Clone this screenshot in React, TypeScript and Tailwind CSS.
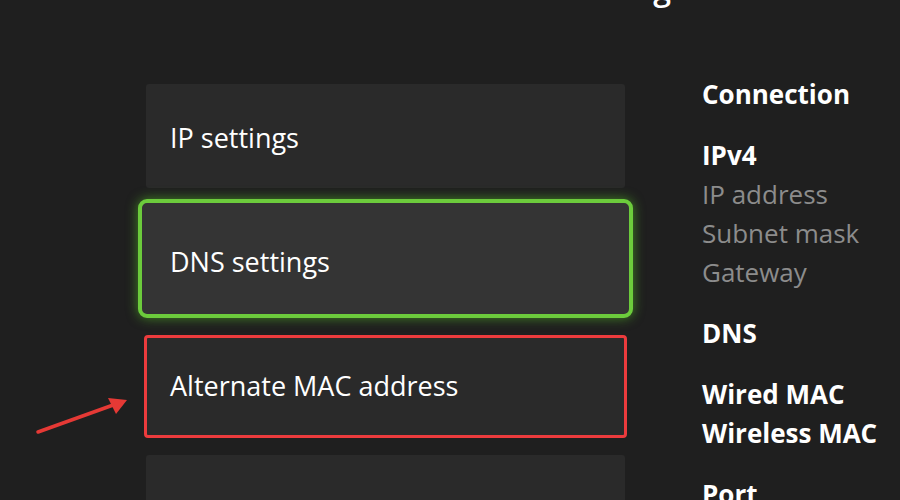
const font = { fontFamily: '"Open Sans", "Noto Sans", sans-serif' }

function Arrow() {
  return (
    <svg className="absolute left-[30px] top-[392px]" width="110" height="50" viewBox="0 0 110 50">
      <line x1="8" y1="40" x2="86" y2="12" stroke="#e53935" strokeWidth="3.5" strokeLinecap="round" />
      <path d="M97 8 L78 6 L86 22 Z" fill="#e53935" />
    </svg>
  )
}

export default function App() {
  return (
    <div className="relative w-[900px] h-[500px] overflow-hidden bg-[#1f1f1f] text-white" style={font}>
      {/* cut-off page title */}
      <div className="absolute left-[405px] top-[-30px] text-[32px] leading-[36px] font-semibold">Advanced settings</div>

      <div className="flex">
        {/* option cards */}
        <div className="ml-[146px] w-[479px] flex flex-col">
          <div className="mt-[84px] h-[104px] bg-[#2a2a2a] rounded-[3px] flex items-center pt-1 px-6 text-[27px]">
            IP settings
          </div>
          <div className="mt-[11px] -mx-2 h-[119px] bg-[#343434] rounded-[9px] border-4 border-[#6ccb3c] shadow-[0_0_12px_rgba(90,200,40,0.6)] flex items-center pt-2 pl-[28px] text-[27px]">
            DNS settings
          </div>
          <div className="mt-[17px] -mx-[2px] h-[103px] bg-[#2a2a2a] rounded-[4px] border-[3px] border-[#ec3b3d] flex items-center pl-[23px] text-[27px]">
            Alternate MAC address
          </div>
          <div className="mt-[17px] h-[60px] bg-[#2a2a2a] rounded-[3px]" />
        </div>

        {/* info list */}
        <div className="ml-[77px] mt-[75px] flex flex-col gap-[22px] text-[26px] leading-[39px]">
          <div className="font-bold">Connection</div>
          <div>
            <div className="font-bold">IPv4</div>
            <div className="text-[#8c8c8c]">IP address</div>
            <div className="text-[#8c8c8c]">Subnet mask</div>
            <div className="text-[#8c8c8c]">Gateway</div>
          </div>
          <div className="font-bold">DNS</div>
          <div className="font-bold">
            <div>Wired MAC</div>
            <div>Wireless MAC</div>
          </div>
          <div className="font-bold">Port</div>
        </div>
      </div>

      <Arrow />
    </div>
  )
}
